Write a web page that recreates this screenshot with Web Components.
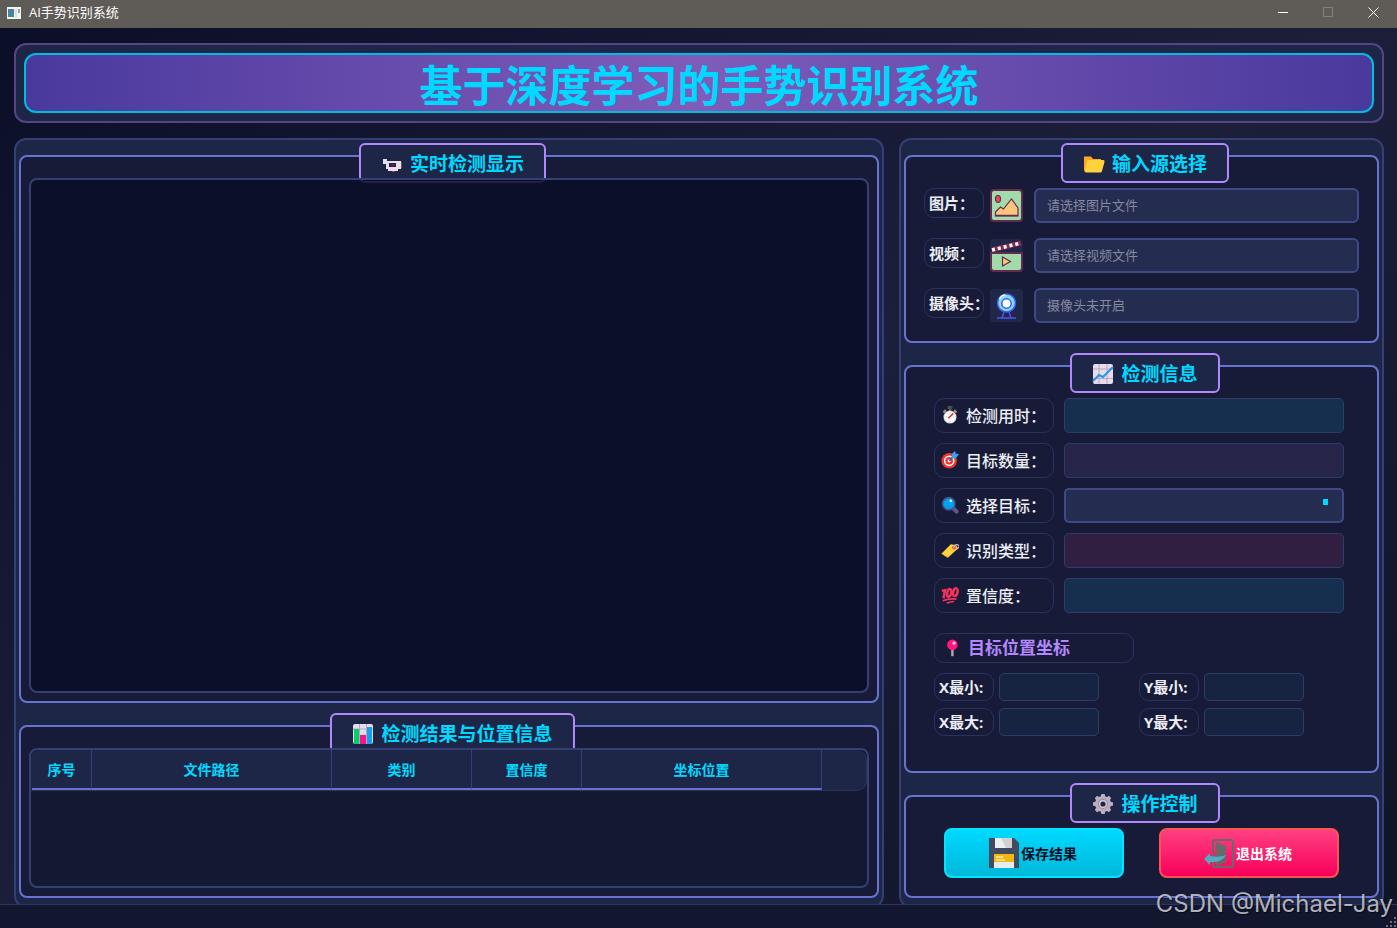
<!DOCTYPE html>
<html lang="zh-CN">
<head>
<meta charset="UTF-8">
<title>AI手势识别系统</title>
<style>
    :root {
        --cyan: #00d9ff;
        --violet: #b388ff;
        --line: #6673d0;
        --line-dim: #343f75;
        --line-soft: #29325d;
        --text: #eceef6;
        --panel: #1e2647;
        --frame: #171b37;
        --field: #242c50;
    }
    body {
        margin: 0;
        font-family: "Open Sans", "Noto Sans CJK SC", sans-serif;
        color: var(--text);
    }
</style>
</head>
<body>
<gesture-app></gesture-app>

<script>
const ICONS = {
    app: `<rect x="1" y="2" width="14" height="12" fill="#f4f4f4"/><rect x="2" y="4" width="6" height="8" fill="#3f8f86"/><path d="M2 4h6v3L2 10z" fill="#4a7eb0"/><rect x="9" y="4" width="2" height="8" fill="#ddd"/><rect x="12" y="4" width="2" height="4" fill="#7fb0a6"/>`,
    camera: `<path d="M2 6h4v2h14v8h-3v2H7v-2H5v-5H2z" fill="#e4dfe8"/><rect x="8" y="10" width="7" height="4" fill="#321b41"/><path d="M10 11h4v2h-4z" fill="#4c2658"/><path d="M11 18h3v1h-3z" fill="#d51e4b"/><path d="M20 9h1v6h-1z" fill="#6c5270"/>`,
    folder: `<path d="M1 3.500h7l2 2.500h8v13H3Q1 19 1 17z" fill="#ffa726"/><path d="M6 7h14q2 0 1.500 2l-2.500 9q-.4 1.500-2 1.500H3q-1.600 0-1-2l2-9Q4.500 7 6 7z" fill="#fdd23c"/>`,
    trend: `<rect x="1" y="1" width="20" height="20" rx="2" fill="#e6dcec"/><path d="M1 6h20M1 15.500h20M7 1v20M15 1v20" stroke="#b6a9bc"/><path d="M1 18l6-6 4 2 10-10" fill="none" stroke="#2a95e8" stroke-width="2"/>`,
    bars: `<rect x="1" y="1" width="20" height="20" rx="2" fill="#e6dcec"/><path d="M1 6h20M7.500 1v20M14.500 1v20" stroke="#b6a9bc"/><rect x="2" y="6" width="5" height="15" fill="#00d067"/><rect x="8" y="12" width="6" height="9" fill="#f5158b"/><rect x="15" y="4" width="5" height="17" fill="#12a2ee"/>`,
    gear: `<g fill="#b9afc0"><rect x="9" y="1" width="4" height="20" rx="1"/><rect x="9" y="1" width="4" height="20" rx="1" transform="rotate(45 11 11)"/><rect x="9" y="1" width="4" height="20" rx="1" transform="rotate(90 11 11)"/><rect x="9" y="1" width="4" height="20" rx="1" transform="rotate(135 11 11)"/><circle cx="11" cy="11" r="8"/></g><circle cx="11" cy="11" r="5" fill="#96899e"/><circle cx="11" cy="11" r="4" fill="#d8d0dd"/><circle cx="11" cy="11" r="2.600" fill="#1e2548"/>`,
    timer: `<rect x="8" y="0" width="6" height="4" rx="1" fill="#4d4d4d"/><path d="M10 4h2v3h-2z" fill="#777"/><path d="M2 7l3-3 2 2-3 3zM20 7l-3-3-2 2 3 3z" fill="#998b96"/><circle cx="11" cy="13.500" r="8" fill="#cfcccb"/><circle cx="11" cy="13.500" r="7" fill="#fff"/><path d="M11 8v1M11 18v1M6 13.500h1M15 13.500h1" stroke="#888"/><path d="M9 15l6-6" stroke="#e0352f" stroke-width="2"/>`,
    target: `<circle cx="10" cy="12" r="9.500" fill="#f0332d"/><circle cx="10" cy="12" r="6.500" fill="#fff"/><circle cx="10" cy="12" r="4.700" fill="#f0332d"/><circle cx="10" cy="12" r="2" fill="#fff"/><path d="M10 12l7-7" stroke="#2369b4" stroke-width="2"/><path d="M13 8V4l4-4 1 3 4 1-4 5h-4z" fill="#36a3ee"/>`,
    search: `<path d="M14 14l5 5" stroke="#655391" stroke-width="5" stroke-linecap="round"/><circle cx="9.500" cy="9.500" r="8.500" fill="#44528f"/><circle cx="9.500" cy="9.500" r="6.500" fill="#00a3f0"/><circle cx="12" cy="6" r="1.700" fill="#d5f3ff"/>`,
    tag: `<path d="M1 15L12 4l6 1 3 4-11 10q-2 1.500-4 0l-5-3q-1-1 0-1z" fill="#ffd23d"/><path d="M2 16l6 4 2-1" fill="none" stroke="#f1a429"/><circle cx="16" cy="8" r="2.500" fill="#ef5748"/><path d="M15 8q3-5 6-3t-2 5" fill="none" stroke="#c9c1cb" stroke-width="1.500"/>`,
    hundred: `<g fill="none" stroke="#f8315f" stroke-width="3"><path d="M1 6l4-1-2 10"/><ellipse cx="10" cy="8.500" rx="2.400" ry="4.800" transform="rotate(14 10 8.500)"/><ellipse cx="17.500" cy="7.500" rx="2.600" ry="4.800" transform="rotate(14 17.500 7.500)"/><path d="M2 18q8-3 17-2M7 21q4-2 9-2" stroke-width="2"/></g>`,
    pin: `<path d="M10 12h3v9h-3z" fill="#a9a9ae"/><circle cx="11.500" cy="7" r="6.500" fill="#ff1480"/><circle cx="13.500" cy="5" r="2" fill="#ffd4e8"/>`,
    picture: `<rect x="1" y="1" width="31" height="31" rx="3" fill="#a1dbaa" stroke="#622b4f" stroke-width="2"/><ellipse cx="8" cy="10" rx="2.500" ry="3.500" fill="#e84a61" stroke="#622b4f" stroke-width="1.200"/><path d="M5.500 27v-4l5-5 3 2 8-10 6.500 9v8z" fill="#ffc57f" stroke="#622b4f" stroke-width="1.200"/><path d="M5 26.500h23" stroke="#622b4f" stroke-width="1.500"/>`,
    clapper: `<path d="M1 14h31v15q0 3-3 3H4q-3 0-3-3z" fill="#a1dbaa" stroke="#622b4f" stroke-width="2"/><path d="M2 11L31 4" stroke="#8a2949" stroke-width="5"/><path d="M2 11L31 4" stroke="#fff" stroke-width="3.500" stroke-dasharray="3 3"/><path d="M12.500 18v9l8-4.500z" fill="#ffc57f" stroke="#622b4f" stroke-width="1.200"/>`,
    webcam: `<circle cx="16.500" cy="14" r="9" fill="#72e3ff" stroke="#4e50f2" stroke-width="1.500"/><circle cx="16.500" cy="14.500" r="4.700" fill="#fff" stroke="#4e50f2" stroke-width="1.500"/><path d="M9.500 10q2-4 6-4" fill="none" stroke="#fff" stroke-width="1.500"/><path d="M14 23l-2 6M19 23l2 6M7 29h19" fill="none" stroke="#4e50f2" stroke-width="1.500"/>`,
    floppy: `<path d="M0 0h25l5 5v25H0z" fill="#434b62"/><path d="M6 0h17v10H6z" fill="#cfd2cf"/><path d="M6 0h6l5 10H6z" fill="#ebefef"/><path d="M5 16h20v8H5z" fill="#efb912"/><path d="M5 24h20v6H5z" fill="#e7eced"/><path d="M7 19h7M7 22h9" stroke="#fff"/>`,
    exit: `<rect x="9" y="2" width="20" height="27" rx="2" fill="none" stroke="#666a6b" stroke-width="2"/><path d="M12 4l10 4v16l-10 4z" fill="#666a6b"/><path d="M22 17q-4 8-16 7v3L0 21l6-6v3q10 2 16-1z" fill="#52acc1"/>`
};

/**
 * Icono SVG por nombre
 */
class UiIcon extends HTMLElement {
    connectedCallback() {
        const box = this.getAttribute('box') || '22';
        this.attachShadow({ mode: 'open' }).innerHTML = `
            <style>
                :host { display: block; flex: none; width: 22px; height: 22px; }
                svg { display: block; width: 100%; height: 100%; }
            </style>
            <svg viewBox="0 0 ${box} ${box}" aria-hidden="true">${ICONS[this.getAttribute('name')]}</svg>
        `;
    }
}

class WindowBar extends HTMLElement {
    connectedCallback() {
        this.attachShadow({ mode: 'open' }).innerHTML = `
            <style>
                :host {
                    display: flex;
                    align-items: center;
                    height: 28px;
                    padding: 0 1px 0 6px;
                    background: #5f5b56;
                    color: white;
                    font-size: 13px;
                }
                ui-icon { width: 16px; height: 16px; margin-bottom: 3px; }
                .name { flex: 1; margin-left: 7px; line-height: 24px; padding-bottom: 4px; }
                button {
                    width: 45px;
                    height: 28px;
                    padding: 0 0 4px;
                    border: none;
                    background: none;
                    color: white;
                }
                button:disabled { color: #85827e; }
                svg { display: block; width: 11px; height: 11px; margin: auto; }
            </style>
            <ui-icon name="app" box="16"></ui-icon>
            <span class="name"><slot></slot></span>
            <button aria-label="最小化"><svg viewBox="0 0 11 11"><path d="M0 5.500h10" stroke="currentColor"/></svg></button>
            <button aria-label="最大化" disabled><svg viewBox="0 0 11 11"><path d="M.5.5h9v9h-9z" fill="none" stroke="currentColor"/></svg></button>
            <button aria-label="关闭"><svg viewBox="0 0 11 11"><path d="M.5.5l10 10M10.500.5l-10 10" stroke="currentColor"/></svg></button>
        `;
    }
}

class AppBanner extends HTMLElement {
    connectedCallback() {
        this.attachShadow({ mode: 'open' }).innerHTML = `
            <style>
                :host {
                    display: block;
                    padding: 8px;
                    border: 2px solid #564485;
                    border-radius: 12px;
                    background: var(--panel);
                }
                h1 {
                    margin: 0;
                    padding-top: 6px;
                    border: 2px solid #00bbe2;
                    border-radius: 12px;
                    background: linear-gradient(90deg, #4a399d, #7f5cba 50%, #4a399d);
                    color: var(--cyan);
                    font-size: 43px;
                    font-weight: 700;
                    line-height: 50px;
                    text-align: center;
                }
            </style>
            <h1><slot></slot></h1>
        `;
    }
}

/**
 * Panel con título superpuesto al marco
 */
class GroupPanel extends HTMLElement {
    connectedCallback() {
        this.attachShadow({ mode: 'open' }).innerHTML = `
            <style>
                :host { display: grid; }
                .frame, .title, .body { grid-area: 1 / 1; min-width: 0; }
                .frame {
                    margin-top: 12px;
                    border: 2px solid var(--line);
                    border-radius: 8px;
                    background: var(--frame);
                }
                .title {
                    justify-self: center;
                    align-self: start;
                    display: flex;
                    align-items: center;
                    gap: 7px;
                    box-sizing: border-box;
                    height: 40px;
                    margin: 0 0 0 7px;
                    padding: 1px 20px 0;
                    border: 2px solid var(--violet);
                    border-radius: 6px;
                    background: var(--panel);
                    color: var(--cyan);
                    font-size: 19px;
                    line-height: 24px;
                }
                .body {
                    position: relative;
                    display: flex;
                    flex-direction: column;
                    padding: var(--body-pad, 35px 10px 10px);
                }
            </style>
            <div class="frame"></div>
            <h2 class="title"><ui-icon name="${this.getAttribute('icon')}"></ui-icon>${this.getAttribute('heading')}</h2>
            <div class="body"><slot></slot></div>
        `;
    }
}

class SourceRow extends HTMLElement {
    connectedCallback() {
        const label = this.getAttribute('label');
        this.attachShadow({ mode: 'open' }).innerHTML = `
            <style>
                :host { display: flex; align-items: flex-start; }
                label {
                    box-sizing: border-box;
                    flex: none;
                    width: 60px;
                    height: 30px;
                    padding-left: 4px;
                    border: 1px solid var(--line-soft);
                    border-radius: 10px;
                    font-size: 15px;
                    font-weight: 700;
                    line-height: 28px;
                    white-space: nowrap;
                }
                button {
                    flex: none;
                    width: 33px;
                    height: 33px;
                    margin: 1px 11px 0 6px;
                    padding: 0;
                    border: none;
                    border-radius: 4px;
                    background: #20284a;
                }
                ui-icon { width: 33px; height: 33px; }
                input {
                    box-sizing: border-box;
                    flex: 1;
                    min-width: 0;
                    height: 35px;
                    padding: 0 11px 2px;
                    border: 2px solid #3e4a86;
                    border-radius: 6px;
                    background: var(--field);
                    color: var(--text);
                    font: inherit;
                    font-size: 13px;
                }
                input::placeholder { color: #858aa0; opacity: 1; }
            </style>
            <label for="path">${label}</label>
            <button aria-label="${this.getAttribute('hint')}"><ui-icon name="${this.getAttribute('icon')}" box="33"></ui-icon></button>
            <input id="path" type="text" placeholder="${this.getAttribute('hint')}">
        `;
    }
}

class InfoField extends HTMLElement {
    connectedCallback() {
        const icon = this.getAttribute('icon');
        const control = this.hasAttribute('choice')
            ? '<select id="value"><option></option></select>'
            : '<input id="value" type="text" readonly>';
        this.attachShadow({ mode: 'open' }).innerHTML = `
            <style>
                :host { display: flex; gap: 10px; height: 35px; }
                label {
                    box-sizing: border-box;
                    flex: none;
                    display: flex;
                    align-items: center;
                    gap: 7px;
                    width: 120px;
                    padding: 0 0 2px 6px;
                    border: 1px solid var(--line-soft);
                    border-radius: 10px;
                    font-size: 16px;
                    font-weight: 500;
                    white-space: nowrap;
                }
                ui-icon { width: 18px; height: 18px; }
                input, select {
                    box-sizing: border-box;
                    flex: 1;
                    min-width: 0;
                    height: 100%;
                    margin: 0;
                    padding: 0 8px;
                    border: 1px solid #2c3d6a;
                    border-radius: 5px;
                    background: var(--tone, #162f4e);
                    color: var(--text);
                    font: inherit;
                }
                select {
                    appearance: none;
                    border: 2px solid #3e4a86;
                    background: linear-gradient(var(--cyan), var(--cyan)) right 14px top 9px / 5px 6px no-repeat var(--field);
                }
                :host([small]) { gap: 5px; height: 28px; width: 165px; }
                :host([small]) label {
                    width: 60px;
                    padding-left: 4px;
                    font-size: 15px;
                    font-weight: 700;
                }
                :host([small]) input { --tone: #162442; }
            </style>
            <label for="value">${icon ? `<ui-icon name="${icon}"></ui-icon>` : ''}${this.getAttribute('label')}</label>
            ${control}
        `;
    }
}

class ResultTable extends HTMLElement {
    connectedCallback() {
        const columns = [['序号', 60], ['文件路径', 240], ['类别', 140], ['置信度', 110], ['坐标位置', 240]];
        this.attachShadow({ mode: 'open' }).innerHTML = `
            <style>
                :host {
                    display: block;
                    box-sizing: border-box;
                    flex: 1;
                    border: 2px solid var(--line-dim);
                    border-radius: 8px;
                    background: #121931;
                }
                .head {
                    padding-left: 1px;
                    border-bottom: 1px solid var(--line-soft);
                    border-right: 1px solid var(--line-soft);
                    border-radius: 8px 10px 10px 0;
                    background: var(--panel);
                }
                table { border-collapse: separate; border-spacing: 0; table-layout: fixed; width: 790px; max-width: 100%; }
                th {
                    box-sizing: border-box;
                    height: 40px;
                    padding: 0;
                    border-right: 1px solid #35407a;
                    border-bottom: 2px solid var(--line);
                    color: var(--cyan);
                    font-size: 14px;
                    font-weight: 700;
                }
            </style>
            <div class="head">
                <table>
                    <thead><tr>${columns.map(([name, width]) => `<th scope="col" style="width: ${width}px">${name}</th>`).join('')}</tr></thead>
                    <tbody></tbody>
                </table>
            </div>
        `;
    }
}

class ActionButton extends HTMLElement {
    connectedCallback() {
        this.attachShadow({ mode: 'open' }).innerHTML = `
            <style>
                :host { display: flex; flex: 1; }
                button {
                    flex: 1;
                    display: flex;
                    align-items: center;
                    justify-content: center;
                    gap: 2px;
                    height: 50px;
                    padding: 0 2px 0 0;
                    border: 2px solid #00e5ff;
                    border-radius: 8px;
                    background: linear-gradient(#00d9ff, #00b8d9);
                    color: #0a0e27;
                    font: inherit;
                    font-size: 14px;
                    font-weight: 700;
                    cursor: pointer;
                }
                :host([danger]) button {
                    border-color: #ff5252;
                    background: linear-gradient(#ff4081, #f8005a);
                    color: white;
                }
                ui-icon { width: 30px; height: 30px; }
            </style>
            <button><ui-icon name="${this.getAttribute('icon')}" box="30"></ui-icon><slot></slot></button>
        `;
    }
}

class GestureApp extends HTMLElement {
    connectedCallback() {
        this.attachShadow({ mode: 'open' }).innerHTML = `
            <style>
                :host {
                    position: relative;
                    display: flex;
                    flex-direction: column;
                    height: 100vh;
                    min-height: 840px;
                    overflow: hidden;
                    background: linear-gradient(to bottom right, #0a0e27, #1b1f3a 50%, #0f1426);
                }
                main {
                    flex: 1;
                    min-height: 0;
                    display: flex;
                    flex-direction: column;
                    gap: 15px;
                    padding: 15px 13px 0 14px;
                    overflow: hidden;
                }
                .columns {
                    flex: 1;
                    min-height: 0;
                    display: grid;
                    grid-template-columns: minmax(0, 1fr) 485px;
                    gap: 15px;
                    margin-bottom: -4px;
                }
                .column {
                    display: flex;
                    flex-direction: column;
                    gap: 10px;
                    padding: 3px 3px 8px;
                    border: 2px solid var(--line-dim);
                    border-radius: 12px;
                    background: var(--panel);
                }
                .grow { flex: 1; }
                .results { height: 185px; }
                .sources { height: 200px; --body-pad: 45px 20px 20px; }
                .info { --body-pad: 45px 35px 20px 30px; }
                .actions { height: 115px; --body-pad: 45px 40px 20px; }
                .screen {
                    flex: 1;
                    border: 2px solid var(--line-dim);
                    border-radius: 8px;
                    background: rgba(9, 13, 38, 0.85);
                }
                .stack { display: flex; flex-direction: column; gap: 15px; }
                .stack.tight { gap: 10px; }
                .coords {
                    box-sizing: border-box;
                    display: flex;
                    align-items: center;
                    gap: 7px;
                    width: 200px;
                    height: 30px;
                    margin: 20px 0 10px;
                    padding-left: 8px;
                    border: 1px solid var(--line-soft);
                    border-radius: 10px;
                    color: var(--violet);
                    font-size: 17px;
                    line-height: 24px;
                }
                .coords ui-icon { width: 18px; height: 18px; }
                .points { display: grid; grid-template-columns: max-content max-content; gap: 7px 40px; }
                .buttons { display: flex; gap: 35px; }
                footer {
                    display: flex;
                    align-items: flex-end;
                    justify-content: flex-end;
                    box-sizing: border-box;
                    height: 24px;
                    border-top: 1px solid #2a3560;
                    background: #12172f;
                }
                footer svg { display: block; width: 11px; height: 11px; }
                .watermark {
                    position: absolute;
                    right: 4px;
                    bottom: 8px;
                    font-family: Inter, sans-serif;
                    font-size: 24px;
                    line-height: 32px;
                    color: rgba(220, 222, 228, 0.8);
                    text-shadow: 1px 1px 1px rgba(0, 0, 0, 0.6);
                }
            </style>
            <window-bar>AI手势识别系统</window-bar>
            <main>
                <app-banner>基于深度学习的手势识别系统</app-banner>
                <div class="columns">
                    <section class="column">
                        <group-panel class="grow" icon="camera" heading="实时检测显示">
                            <div class="screen"></div>
                        </group-panel>
                        <group-panel class="results" icon="bars" heading="检测结果与位置信息">
                            <result-table></result-table>
                        </group-panel>
                    </section>
                    <section class="column">
                        <group-panel class="sources" icon="folder" heading="输入源选择">
                            <div class="stack">
                                <source-row label="图片：" icon="picture" hint="请选择图片文件"></source-row>
                                <source-row label="视频：" icon="clapper" hint="请选择视频文件"></source-row>
                                <source-row label="摄像头：" icon="webcam" hint="摄像头未开启"></source-row>
                            </div>
                        </group-panel>
                        <group-panel class="info grow" icon="trend" heading="检测信息">
                            <div class="stack tight">
                                <info-field icon="timer" label="检测用时："></info-field>
                                <info-field icon="target" label="目标数量：" style="--tone: #28254b"></info-field>
                                <info-field icon="search" label="选择目标：" choice></info-field>
                                <info-field icon="tag" label="识别类型：" style="--tone: #301f40"></info-field>
                                <info-field icon="hundred" label="置信度："></info-field>
                            </div>
                            <h3 class="coords"><ui-icon name="pin"></ui-icon>目标位置坐标</h3>
                            <div class="points">
                                <info-field small label="X最小:"></info-field>
                                <info-field small label="Y最小:"></info-field>
                                <info-field small label="X最大:"></info-field>
                                <info-field small label="Y最大:"></info-field>
                            </div>
                        </group-panel>
                        <group-panel class="actions" icon="gear" heading="操作控制">
                            <div class="buttons">
                                <action-button icon="floppy">保存结果</action-button>
                                <action-button icon="exit" danger>退出系统</action-button>
                            </div>
                        </group-panel>
                    </section>
                </div>
            </main>
            <footer>
                <svg viewBox="0 0 11 11" fill="#6b6f80"><path d="M8 0h2v2H8zM8 4h2v2H8zM8 8h2v2H8zM4 4h2v2H4zM4 8h2v2H4zM0 8h2v2H0z"/></svg>
            </footer>
            <div class="watermark">CSDN @Michael-Jay</div>
        `;
    }
}

customElements.define('ui-icon', UiIcon);
customElements.define('window-bar', WindowBar);
customElements.define('app-banner', AppBanner);
customElements.define('group-panel', GroupPanel);
customElements.define('source-row', SourceRow);
customElements.define('info-field', InfoField);
customElements.define('result-table', ResultTable);
customElements.define('action-button', ActionButton);
customElements.define('gesture-app', GestureApp);
</script>
</body>
</html>
